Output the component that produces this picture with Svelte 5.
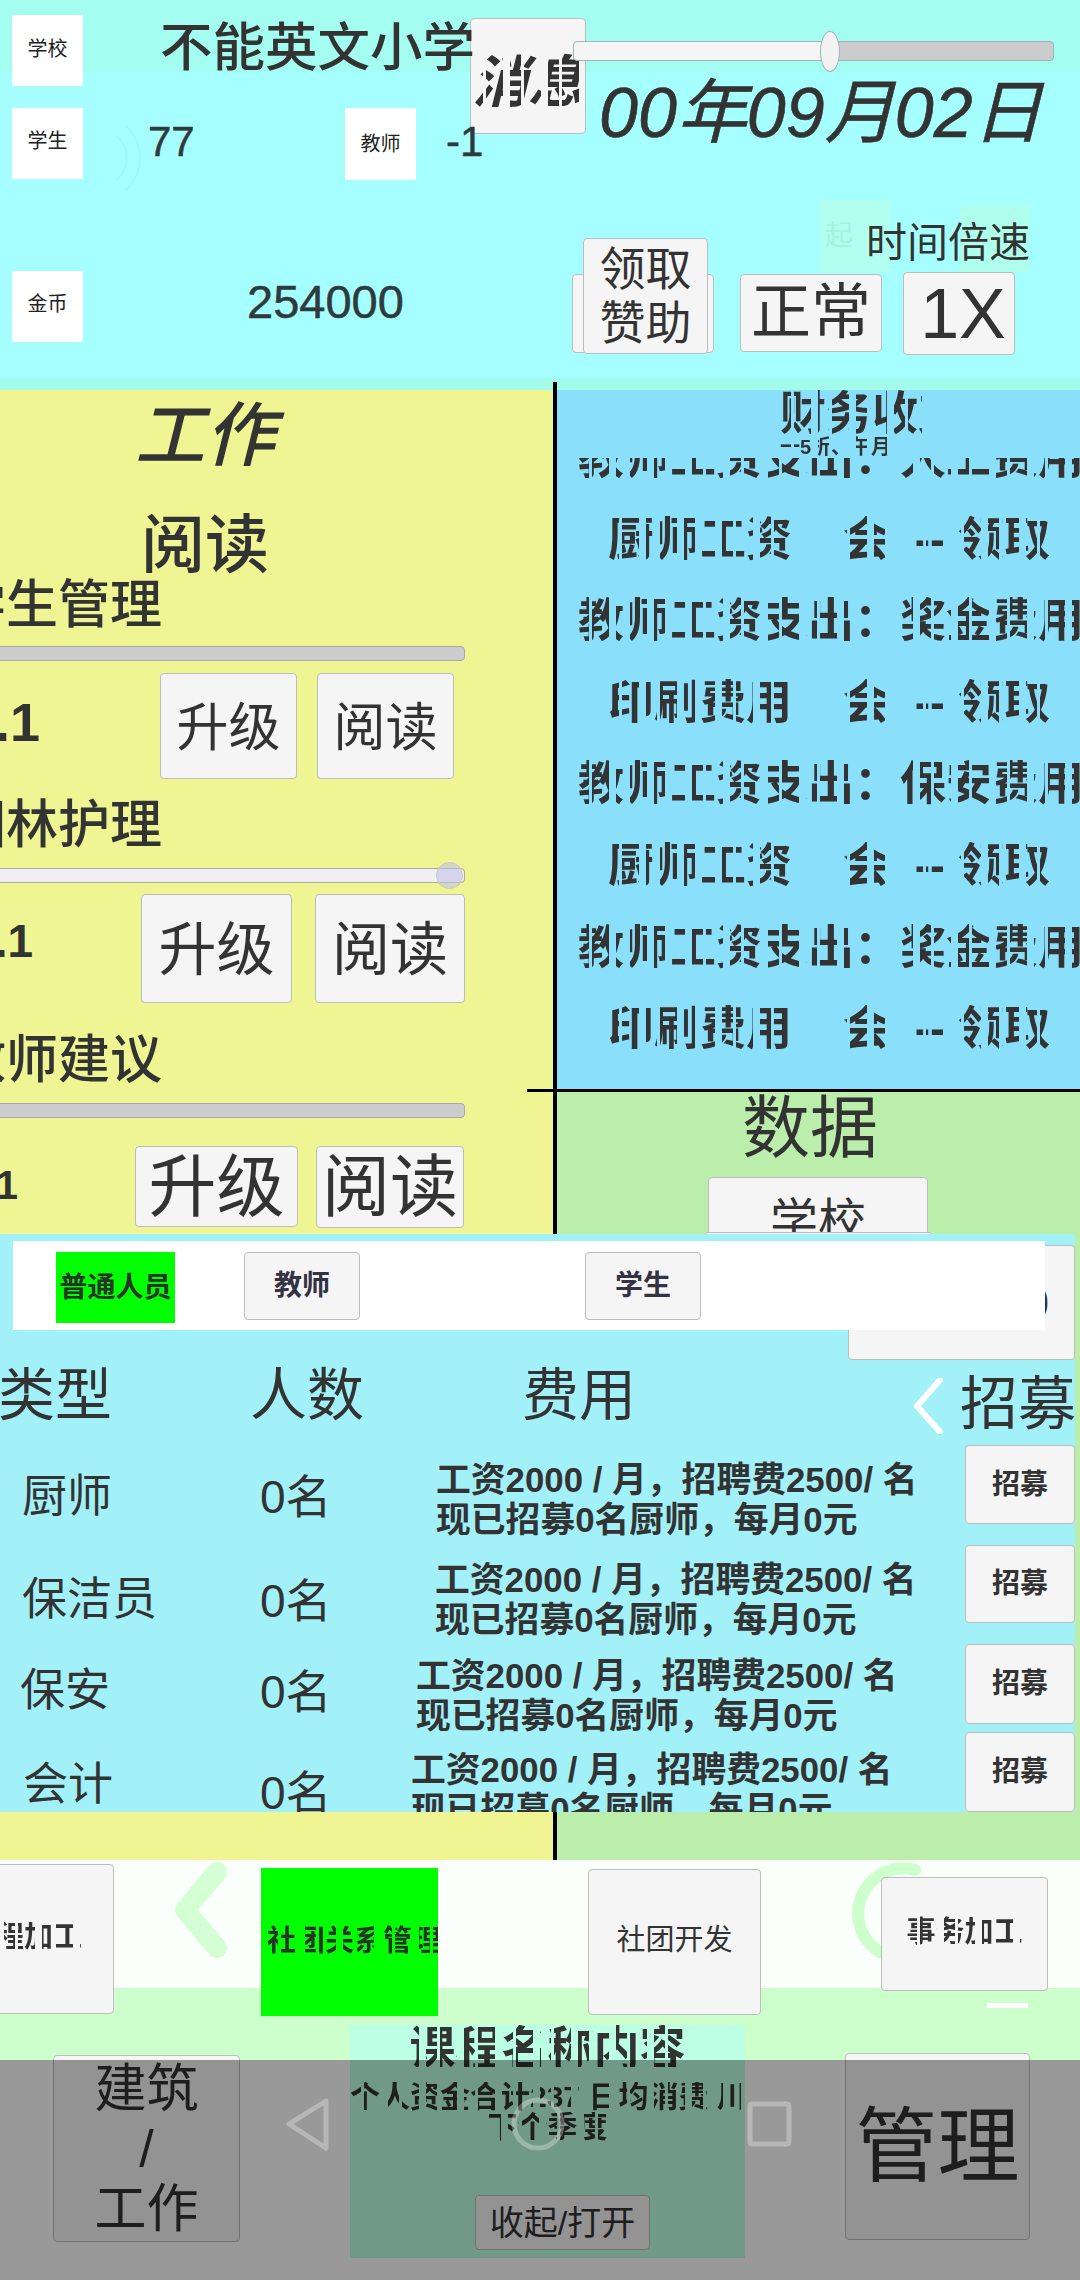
<script>
  const skills = [
    { name: '学生管理', cls: 'g1', val: '1.1', fill: 0 },
    { name: '园林护理', cls: 'g2', val: '1.1', fill: 100 },
    { name: '教师建议', cls: 'g3', val: '1.1', fill: 0 }
  ];
  const lines = [
    ['long', '教师工资支出：人工费用'],
    ['short', '厨师工资\u00a0\u00a0\u00a0\u00a0会\u00a0\u00a0--\u00a0领取'],
    ['long', '教师工资支出：奖金费用'],
    ['short', '印刷费用\u00a0\u00a0\u00a0\u00a0会\u00a0\u00a0--\u00a0领取'],
    ['long', '教师工资支出：保安费用'],
    ['short', '厨师工资\u00a0\u00a0\u00a0\u00a0会\u00a0\u00a0--\u00a0领取'],
    ['long', '教师工资支出：奖金费用'],
    ['short', '印刷费用\u00a0\u00a0\u00a0\u00a0会\u00a0\u00a0--\u00a0领取']
  ];
  const desc1 = '工资2000 / 月，招聘费2500/ 名';
  const desc2 = '现已招募0名厨师，每月0元';
  const staff = [
    { name: '厨师', h: 79, top: 1445, nameC: 1497, qtyC: 1497, descC: 1500, nx: 22, dx: 436, gap: 0 },
    { name: '保洁员', h: 78, top: 1545, nameC: 1600, qtyC: 1601, descC: 1600, nx: 22, dx: 435, gap: 21 },
    { name: '保安', h: 80, top: 1644, nameC: 1691, qtyC: 1692, descC: 1696, nx: 20, dx: 416, gap: 21 },
    { name: '会计', h: 80, top: 1732, nameC: 1785, qtyC: 1793, descC: 1790, nx: 23, dx: 411, gap: 8 }
  ];
</script>

<div class="page">
  <header class="hdr">
    <svg class="wave" width="60" height="80" viewBox="0 0 60 80"><path d="M34 6 A44 44 0 0 1 34 70 M24 16 A28 28 0 0 1 24 60" fill="none" stroke="#9df8f6" stroke-width="2" /></svg>
    <div class="hl">
      <div class="hrow r1">
        <div class="tag">学校</div>
        <div class="title"><span>不能英文小学</span></div>
      </div>
      <div class="hrow r2">
        <div class="tag up">学生</div>
        <div class="num n77">77</div>
        <div class="tag t2">教师</div>
        <div class="num nm1">-1</div>
      </div>
      <div class="hrow r3">
        <div class="tag up">金币</div>
        <div class="num gold">254000</div>
      </div>
    </div>
    <div class="hr">
      <div class="hr-top">
        <button class="btn msg"><span class="glitch">消息</span></button>
        <div class="hr-col">
          <div class="slider big"><i class="on"></i><b class="thumb"></b></div>
          <div class="date">00年09月02日</div>
        </div>
      </div>
      <div class="hr-mid">
        <div class="ghost">起</div>
        <div class="speed">时间倍速</div>
        <div class="ghost g2nd"></div>
      </div>
      <div class="hr-bot">
        <button class="btn back"></button>
        <button class="btn claim">领取<br />赞助</button>
        <button class="btn normal">正常</button>
        <button class="btn onex">1X</button>
      </div>
    </div>
  </header>

  <main class="main">
    <section class="work">
      <h2 class="wtitle">工作</h2>
      <h3 class="wsub">阅读</h3>
      {#each skills as s}
        <div class="skill {s.cls}">
          <div class="sname">{s.name}</div>
          <div class="sbar"><i style="width:{s.fill}%"></i><b></b></div>
          <div class="srow">
            <div class="sval">{s.val}</div>
            <button class="btn sb1">升级</button>
            <button class="btn sb2">阅读</button>
          </div>
        </div>
      {/each}
    </section>
    <div class="vline"></div>
    <section class="side">
      <div class="fin">
        <div class="fhead glitch">财务收支</div>
        <div class="fsub glitch">一5折、午月</div>
        <div class="fclip"><div class="fline long glitch">教师工资支出：人工费用</div></div>
        {#each lines.slice(1) as l}
          <div class="fline {l[0]} glitch">{l[1]}</div>
        {/each}
      </div>
      <div class="hline"></div>
      <div class="data">
        <h2 class="dtitle">数据</h2>
        <button class="btn dschool"><span>学校</span></button>
        <button class="btn dnext"></button>
      </div>
    </section>
  </main>

  <div class="modal">
    <button class="btn rear"><span>0</span></button>
    <nav class="tabs">
      <button class="tab on">普通人员</button>
      <button class="btn tab t1">教师</button>
      <button class="btn tab t3">学生</button>
    </nav>
    <div class="heads">
      <span class="h1">类型</span>
      <span class="h2">人数</span>
      <span class="h3">费用</span>
      <svg class="chev" width="32" height="56" viewBox="0 0 32 56"><path d="M28 2 L5 28 L28 54" fill="none" stroke="#fff" stroke-width="6" stroke-linecap="round" stroke-linejoin="round" /></svg>
      <span class="h4">招募</span>
    </div>
    <div class="list">
      {#each staff as p}
        <div class="person" style="height:{p.h}px;margin-top:{p.gap}px">
          <div class="pname" style="margin-top:{p.nameC - 25 - p.top}px;margin-left:{p.nx}px">{p.name}</div>
          <div class="pqty" style="margin-top:{p.qtyC - 25 - p.top}px">0名</div>
          <div class="pdesc" style="margin-top:{p.descC - 40 - p.top}px;margin-left:{p.dx - 410}px">{desc1}<br />{desc2}</div>
          <button class="btn hire" style="height:{p.h}px">招募</button>
        </div>
      {/each}
    </div>
  </div>

  <footer class="dock">
    <svg class="decor" width="1080" height="130" viewBox="0 0 1080 130"><path d="M217 12 L185 50 L217 88" fill="none" stroke="#d4ffd4" stroke-width="20" stroke-linecap="round" stroke-linejoin="round" /><path d="M915 10 A45 45 0 0 0 880 92" fill="none" stroke="#ccffcc" stroke-width="12" stroke-linecap="round" /></svg>
    <div class="dock-top">
      <button class="btn d1"><span class="glitch">课程加工</span></button>
      <button class="d2"><span class="glitch">社团关系管理</span></button>
      <button class="btn d3">社团开发</button>
      <button class="btn d4"><span class="glitch">事务加工</span></button>
    </div>
    <i class="dash"></i>
    <div class="dock-bot">
      <button class="btn bld">建筑<br />/<br />工作</button>
      <div class="center">
        <div class="c1 glitch">课程名称内容</div>
        <div class="c2 glitch">个人资金合计237 日均消费 川</div>
        <div class="c3 glitch">下个季度</div>
        <button class="btn fold">收起/打开</button>
      </div>
      <button class="btn mgr">管理</button>
    </div>
  </footer>

  <div class="sysnav">
    <svg width="1080" height="220" viewBox="0 0 1080 220">
      <g fill="none" stroke="#fff" stroke-opacity=".3" stroke-width="5" stroke-linejoin="round">
        <path d="M326 41 L289 64 L326 88 Z" />
        <circle cx="538" cy="64" r="24" />
        <rect x="750" y="44" width="39" height="40" rx="2" />
      </g>
    </svg>
  </div>
</div>

<style>
  :global(body) { margin: 0; background: #fff; }
  .page {
    position: relative;
    width: 1080px;
    height: 2280px;
    overflow: hidden;
    font-family: "Liberation Sans", "Noto Sans CJK SC", sans-serif;
    color: #333;
  }
  .btn {
    background: #f5f5f5;
    border: 1px solid #bdbdbd;
    border-radius: 4px;
    color: #333;
    padding: 0;
    font-family: inherit;
    display: block;
  }
  button { font-family: inherit; }
  .glitch {
    font-weight: 700;
    -webkit-mask-image: repeating-linear-gradient(90deg, #000 0 11px, transparent 11px 14px, #000 14px 31px, transparent 31px 38px);
    mask-image: repeating-linear-gradient(90deg, #000 0 11px, transparent 11px 14px, #000 14px 31px, transparent 31px 38px);
  }

  /* header */
  .hdr {
    position: relative;
    display: flex;
    height: 390px;
    background: linear-gradient(#a3fdf0 0 72px, #a6ffff 72px 378px, #a3fbea 378px);
  }
  .wave { position: absolute; left: 92px; top: 120px; }
  .hl { width: 470px; padding-left: 12px; box-sizing: border-box; flex: none; position: relative; }
  .hrow { display: flex; align-items: flex-start; }
  .r1 { margin-top: 15px; height: 72px; }
  .r2 { margin-top: 21px; height: 73px; }
  .r3 { margin-top: 90px; height: 71px; }
  .tag {
    width: 71px;
    height: 71px;
    background: #fff;
    font-size: 20px;
    line-height: 69px;
    text-align: center;
    color: #222;
    flex: none;
  }
  .tag.up { line-height: 66px; }
  .title {
    margin-left: 77px;
    font-size: 52.5px;
    height: 57px;
    line-height: 66px;
    overflow: hidden;
    white-space: nowrap;
    width: 330px;
    flex: none;
    font-weight: 500;
  }
  .num { color: #2f3a3c; white-space: nowrap; -webkit-text-stroke: .5px #2f3a3c; flex: none; }
  .n77 { font-size: 42px; line-height: 50px; margin-left: 65px; margin-top: 9px; width: 197px; }
  .t2 { height: 72px; line-height: 72px; }
  .nm1 { font-size: 42px; line-height: 50px; margin-left: 30px; margin-top: 9px; }
  .gold { font-size: 47px; line-height: 56px; margin-left: 164px; margin-top: 3px; }

  .hr { width: 610px; flex: none; }
  .hr-top { display: flex; height: 200px; }
  .msg { width: 116px; height: 116px; margin-top: 18px; font-size: 56px; line-height: 70px; padding-top: 14px; font-style: italic; flex: none; overflow: hidden; white-space: nowrap; }
  .hr-col { flex: 1; }
  .slider { position: relative; }
  .big {
    width: 481px;
    height: 20px;
    margin: 41px 0 0 -13px;
    background: #ccc;
    border: 1px solid #9fb5b5;
    border-radius: 4px;
    box-sizing: border-box;
  }
  .big .on { position: absolute; left: 0; top: 0; bottom: 0; width: 247px; background: #f5f5f5; border-radius: 4px 0 0 4px; }
  .big .thumb { position: absolute; left: 246px; top: -11px; width: 20px; height: 41px; background: #f2f2f2; border: 1px solid #9fb5b5; border-radius: 50%; box-sizing: border-box; }
  .date {
    margin: 14px 0 0 13px;
    font-size: 70px;
    line-height: 76px;
    font-style: italic;
    font-weight: 400;
    -webkit-text-stroke: .6px #333;
    white-space: nowrap;
  }
  .hr-mid { display: flex; position: relative; height: 72px; }
  .ghost {
    width: 70px;
    height: 72px;
    margin-left: 350px;
    background: rgba(190, 255, 225, .5);
    color: rgba(160, 240, 215, .8);
    font-size: 28px;
    line-height: 72px;
    flex: none;
    box-sizing: border-box;
    padding-left: 5px;
  }
  .g2nd { position: absolute; left: 140px; top: 5px; height: 67px; background: rgba(190, 255, 200, .35); }
  .speed { font-size: 41px; line-height: 50px; margin: 18px 0 0 -24px; white-space: nowrap; position: relative; z-index: 1; }
  .hr-bot { display: flex; position: relative; align-items: flex-start; }
  .back { width: 142px; height: 79px; margin: 2px 0 0 102px; }
  .claim {
    position: absolute;
    left: 113px;
    top: -34px;
    width: 125px;
    height: 116px;
    font-size: 46px;
    line-height: 54px;
  }
  .normal { width: 142px; height: 78px; margin: 2px 0 0 26px; font-size: 60px; line-height: 66px; }
  .onex { width: 112px; height: 83px; margin: 0 0 0 21px; font-size: 70px; line-height: 80px; padding-left: 8px; }

  /* main */
  .main { display: flex; height: 1470px; position: relative; }
  .work { width: 553px; flex: none; background: #eff593; overflow: hidden; }
  .vline { width: 4px; flex: none; background: #000; margin-top: -8px; }
  .side { flex: 1; display: flex; flex-direction: column; position: relative; }
  .wtitle { margin: 11px 0 0; width: 410px; text-align: center; font-size: 70px; line-height: 70px; font-style: italic; font-weight: 500; }
  .wsub { margin: 43px 0 0; width: 410px; text-align: center; font-size: 64px; line-height: 62px; font-weight: 500; }
  .skill { width: 553px; }
  .sname { margin-left: -46px; font-size: 52px; line-height: 52px; font-weight: 500; white-space: nowrap; }
  .sbar { position: relative; height: 15px; margin-left: -10px; width: 475px; background: #ccc; border: 1px solid #aaa; border-radius: 4px; box-sizing: border-box; }
  .sbar i { position: absolute; left: 0; top: 0; bottom: 0; background: #f0f0f0; border-radius: 4px; }
  .sbar b { display: none; }
  .srow { display: flex; align-items: flex-start; }
  .sval { margin-left: -60px; width: 100px; text-align: right; white-space: nowrap; font-weight: 700; }
  .g1 .sname { margin-top: 3px; }
  .g1 .sbar { margin-top: 15px; }
  .g1 .srow { margin-top: 12px; height: 106px; }
  .g1 .sval { font-size: 54px; line-height: 60px; margin-top: 19px; }
  .g1 .sb1 { margin-left: 120px; width: 137px; height: 106px; font-size: 52px; padding-bottom: 6px; }
  .g1 .sb2 { margin-left: 20px; width: 137px; height: 106px; font-size: 52px; padding-bottom: 6px; }
  .g2 .sname { margin-top: 20px; }
  .g2 .sbar { margin-top: 17px; }
  .g2 .sbar b { display: block; position: absolute; right: 1px; top: -7px; width: 27px; height: 27px; border-radius: 50%; background: rgba(190, 190, 235, .55); border: 1px solid #c8c8c8; box-sizing: border-box; }
  .g2 .srow { margin-top: 11px; height: 109px; }
  .g2 .sval { width: 93px; font-size: 46px; line-height: 54px; margin-top: 20px; }
  .g2 .sb1 { margin-left: 108px; width: 151px; height: 109px; font-size: 58px; padding-bottom: 8px; }
  .g2 .sb2 { margin-left: 23px; width: 150px; height: 109px; font-size: 58px; padding-bottom: 8px; }
  .g3 .sname { margin-top: 31px; }
  .g3 .sbar { margin-top: 17px; }
  .g3 .srow { margin-top: 28px; height: 82px; }
  .g3 .sval { width: 78px; font-size: 40px; line-height: 46px; margin-top: 16px; }
  .g3 .sb1 { margin-left: 117px; width: 163px; height: 81px; font-size: 68px; line-height: 78px; }
  .g3 .sb2 { margin-left: 18px; width: 148px; height: 82px; font-size: 68px; line-height: 78px; white-space: nowrap; }

  .fin { height: 699px; background: #8adffb; overflow: hidden; flex: none; }
  .fhead { margin: 0 0 0 223px; width: 142px; font-size: 46px; line-height: 46px; white-space: nowrap; }
  .fsub { margin: 0 0 0 223px; width: 142px; font-size: 20px; line-height: 22px; white-space: nowrap; }
  .fclip { height: 22px; overflow: hidden; }
  .fclip .fline { margin-top: -24px; }
  .fline { height: 46px; line-height: 46px; font-size: 46px; white-space: nowrap; margin-top: 35.6px; }
  .long { margin-left: 21px; }
  .short { margin-left: 51px; }
  .hline { position: absolute; left: -30px; right: 0; top: 699px; height: 3px; background: #000; }
  .data { flex: 1; background: #bbedab; padding-top: 5px; }
  .dtitle { margin: 0 0 0 185px; font-size: 68px; line-height: 68px; font-weight: 400; }
  .dschool { margin: 15px 0 0 151px; width: 220px; height: 56px; border-radius: 4px 4px 0 0; overflow: hidden; font-size: 48px; line-height: 60px; }
  .dschool span { display: block; margin-top: 14px; }
  .dnext { margin: -1px 0 0 147px; width: 229px; height: 80px; }

  /* modal */
  .modal {
    position: absolute;
    left: 0;
    top: 1234px;
    width: 1075px;
    height: 578px;
    background: #a2f1f9;
    overflow: hidden;
    z-index: 2;
  }
  .rear { position: absolute; left: 848px; top: 11px; width: 227px; height: 115px; font-size: 46px; text-align: right; padding-right: 25px; }
  .tabs {
    position: relative;
    display: flex;
    align-items: flex-start;
    margin: 7px 0 0 13px;
    width: 1032px;
    height: 89px;
    background: #fff;
  }
  .tab { margin-top: 11px; height: 68px; width: 116px; font-size: 28px; line-height: 60px; font-weight: 700; color: #334; padding: 0; flex: none; }
  .tab.on { margin-left: 43px; width: 119px; height: 71px; background: #00ff00; color: #263326; border: 0; font-size: 28px; white-space: nowrap; padding: 0; }
  .t1 { margin-left: 69px; }
  .t3 { margin-left: 225px; }
  .heads { display: flex; align-items: flex-start; margin-top: 38px; height: 62px; font-size: 57px; line-height: 54px; white-space: nowrap; position: relative; }
  .heads span { display: block; flex: none; }
  .h1 { width: 250px; margin-left: -2px; margin-right: 2px; }
  .h2 { width: 272px; }
  .h3 { width: 390px; }
  .chev { margin-top: 10px; flex: none; }
  .h4 { margin: 6px 0 0 16px; font-size: 58px; line-height: 60px; }
  .list { margin-top: 15px; }
  .person { display: grid; grid-template-columns: 260px 150px 555px 110px; align-items: start; }
  .pname { font-size: 45px; line-height: 50px; white-space: nowrap; }
  .pqty { font-size: 46px; line-height: 50px; white-space: nowrap; }
  .pdesc { font-size: 34.8px; line-height: 40px; font-weight: 700; white-space: nowrap; }
  .hire { width: 110px; font-size: 28px; line-height: 60px; font-weight: 700; }

  /* dock */
  .dock {
    position: relative;
    height: 420px;
    background: linear-gradient(#fbfffb 0 128px, #ccffcc 128px 200px, #fff 200px);
  }
  .decor { position: absolute; left: 0; top: 0; }
  .dock-top { position: relative; display: flex; align-items: flex-start; height: 156px; }
  .dock-top button { flex: none; font-size: 29px; line-height: 40px; white-space: nowrap; overflow: hidden; padding-bottom: 4px; }
  .d1 { width: 164px; height: 150px; margin: 4px 0 0 -50px; padding-right: 16px; }
  .d2 { width: 177px; height: 148px; margin: 8px 0 0 147px; background: #00ff00; border: 0; color: #263326; }
  .d3 { width: 173px; height: 146px; margin: 9px 0 0 150px; }
  .d4 { width: 167px; height: 114px; margin: 17px 0 0 120px; }
  .dash { position: absolute; left: 987px; top: 143px; width: 41px; height: 5px; background: #fff; }
  .dock-bot { display: flex; align-items: flex-start; }
  .bld { width: 187px; height: 187px; margin: 39px 0 0 53px; font-size: 52px; line-height: 60px; flex: none; }
  .center {
    width: 395px;
    height: 233px;
    margin: 9px 0 0 110px;
    background: #bbffe5;
    flex: none;
    text-align: center;
    position: relative;
  }
  .c1 { font-size: 46px; line-height: 46px; white-space: nowrap; height: 42px; overflow: hidden; }
  .c2 { font-size: 30px; line-height: 30px; margin-top: 15px; white-space: nowrap; }
  .c3 { font-size: 30px; line-height: 30px; margin: 0 auto; width: 155px; }
  .fold { position: absolute; left: 125px; top: 170px; width: 175px; height: 55px; font-size: 34px; line-height: 48px; }
  .mgr { width: 185px; height: 187px; margin: 37px 0 0 100px; font-size: 82px; line-height: 80px; flex: none; white-space: nowrap; }
  .sysnav { position: absolute; left: 0; bottom: 0; width: 1080px; height: 220px; background: rgba(0, 0, 0, .4); z-index: 3; }
  .sysnav svg { display: block; }
</style>
